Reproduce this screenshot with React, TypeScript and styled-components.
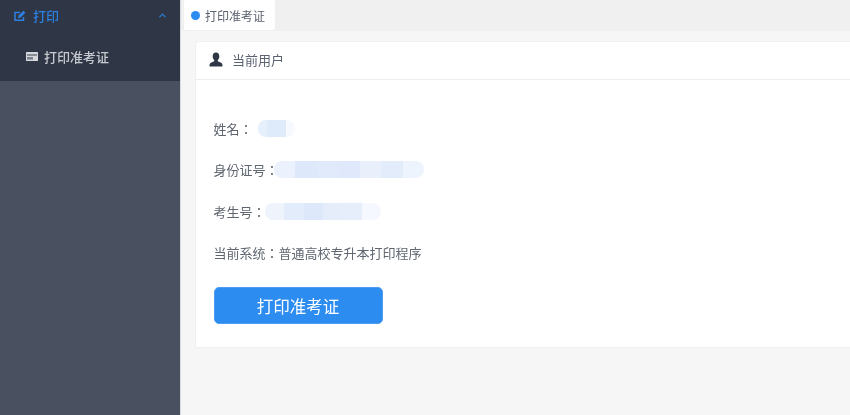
import styled, { createGlobalStyle } from 'styled-components';
import { ChevronUp } from 'lucide-react';

const GlobalStyle = createGlobalStyle`
  html, body {
    margin: 0;
    padding: 0;
    overflow: hidden;
    background: #f6f6f7;
  }
  * {
    box-sizing: border-box;
  }
`;

const Page = styled.div`
  display: flex;
  width: 850px;
  height: 415px;
  overflow: hidden;
  font-family: 'Noto Sans CJK JP', 'Liberation Sans', sans-serif;
  color: #515a6e;
  filter: blur(0.5px);
`;

const Sidebar = styled.aside`
  display: flex;
  flex-direction: column;
  width: 181px;
  flex-shrink: 0;
  background: #495060;
  border-right: 1px solid #d9dbe0;
`;

const MenuBlock = styled.div`
  display: flex;
  flex-direction: column;
  height: 81px;
  background: #2f3646;
`;

const MenuTitle = styled.div`
  display: flex;
  align-items: center;
  height: 33px;
  padding: 0 12px 0 14px;
  gap: 7px;
  color: #2d7fe0;
  font-size: 13px;
  font-weight: 500;
`;

const MenuLabel = styled.span`
  flex: 1;
`;

const MenuItem = styled.div`
  display: flex;
  align-items: center;
  height: 51px;
  padding: 0 0 0 26px;
  gap: 6px;
  color: #c6c9cf;
  font-size: 13px;
  font-weight: 500;
`;

const Main = styled.main`
  display: flex;
  flex-direction: column;
  flex: 1;
  min-width: 0;
`;

const TabBar = styled.div`
  display: flex;
  height: 31px;
  padding-left: 3px;
  background: #f0f0f0;
`;

const Tab = styled.div`
  display: flex;
  align-items: center;
  gap: 5px;
  width: 91px;
  height: 30px;
  padding-left: 7px;
  background: #fff;
  border-radius: 2px;
  font-size: 12px;
  color: #5b6270;
`;

const TabDot = styled.span`
  width: 9px;
  height: 9px;
  border-radius: 50%;
  background: #2d8cf0;
`;

const Content = styled.div`
  flex: 1;
  padding: 10px 0 0 14px;
  background: #f6f6f7;
`;

const Card = styled.section`
  width: 670px;
  height: 307px;
  background: #fff;
  border: 1px solid #eef0f4;
  border-right: none;
  border-radius: 3px 0 0 3px;
`;

const CardHeader = styled.header`
  display: flex;
  align-items: center;
  gap: 9px;
  height: 38px;
  padding: 0 0 2px 13px;
  border-bottom: 1px solid #eceef2;
  font-size: 13px;
  color: #5b6270;
`;

const CardBody = styled.div`
  display: flex;
  flex-direction: column;
  align-items: flex-start;
  padding: 36px 0 0 17.500px;
`;

const InfoRow = styled.div`
  display: flex;
  align-items: center;
  height: 24px;
  margin-bottom: 17.5px;
  font-size: 13px;
  color: #5f6670;
`;

const Redaction = styled.span<{ $width: number; $offset: number }>`
  display: block;
  width: ${({ $width }) => $width}px;
  height: 17px;
  margin-left: ${({ $offset }) => $offset}px;
  border-radius: 8px;
`;

const PrintButton = styled.button`
  width: 169px;
  height: 37px;
  margin-top: 5px;
  border: 1px solid #4f9df3;
  border-radius: 5px;
  background: #2d8cf0;
  color: #fff;
  font-family: inherit;
  font-size: 16.5px;
  padding: 0;
`;

const EditIcon = () => (
  <svg width="12" height="12" viewBox="0 0 12 12" fill="none" stroke="#2d7fe0" strokeWidth="1.5">
    <path d="M9.500 7v3.300H1V2.500h5" />
    <path d="M4 8.200 4.600 5.500 9.400 .8l2 2L6.700 7.600z" fill="#2d7fe0" stroke="none" />
  </svg>
);

const CardIcon = () => (
  <svg width="12" height="9" viewBox="0 0 12 9">
    <rect width="12" height="9" rx="0.5" fill="#d6d8dc" />
    <rect x="1" y="2.400" width="10" height="1.200" fill="#565c6a" />
    <rect x="1" y="5" width="6" height="2.600" fill="#7b808c" />
  </svg>
);

const UserIcon = () => (
  <svg width="14" height="15" viewBox="0 0 14 15" fill="#2f3646">
    <path d="M7 .5c2.100 0 3.300 1.600 3.300 3.700 0 1.600-.6 3-1.500 3.800v1.300l3.300 1.500c1.100.5 1.400 1.300 1.400 3.700H.5c0-2.400.3-3.200 1.400-3.700l3.300-1.500V8C4.300 7.200 3.700 5.800 3.700 4.200 3.700 2.100 4.900 .5 7 .5z" />
  </svg>
);

// blocky colour bands of the pixelated personal data
const bands = (colors: string[]) => {
  const step = 100 / colors.length;
  const stops = colors.map((c, i) => `${c} ${i * step}% ${(i + 1) * step}%`);
  return `linear-gradient(90deg, ${stops.join(', ')})`;
};

const rows = [
  { label: '姓名：', width: 37, offset: 5, colors: ['#e6effc', '#deebfb', '#dfeafb', '#f6f9fe'] },
  {
    label: '身份证号：',
    width: 150,
    offset: -5,
    colors: ['#ebf2fd', '#dde8fa', '#e0eafb', '#dfe9fb', '#e9f0fc', '#e3ecfb', '#eef4fd'],
  },
  {
    label: '考生号：',
    width: 116,
    offset: -1,
    colors: ['#eef3fc', '#e3ecfb', '#dde8fa', '#e5edfb', '#e6eefc', '#f5f8fe'],
  },
];

export default function App() {
  return (
    <Page>
      <GlobalStyle />
      <Sidebar>
        <MenuBlock>
          <MenuTitle>
            <EditIcon />
            <MenuLabel>打印</MenuLabel>
            <ChevronUp size={11} strokeWidth={2.5} color="#2d7fe0" />
          </MenuTitle>
          <MenuItem>
            <CardIcon />
            打印准考证
          </MenuItem>
        </MenuBlock>
      </Sidebar>
      <Main>
        <TabBar>
          <Tab>
            <TabDot />
            打印准考证
          </Tab>
        </TabBar>
        <Content>
          <Card>
            <CardHeader>
              <UserIcon />
              当前用户
            </CardHeader>
            <CardBody>
              {rows.map((row) => (
                <InfoRow key={row.label}>
                  {row.label}
                  <Redaction
                    $width={row.width}
                    $offset={row.offset}
                    style={{ background: bands(row.colors) }}
                  />
                </InfoRow>
              ))}
              <InfoRow>当前系统：普通高校专升本打印程序</InfoRow>
              <PrintButton>打印准考证</PrintButton>
            </CardBody>
          </Card>
        </Content>
      </Main>
    </Page>
  );
}
